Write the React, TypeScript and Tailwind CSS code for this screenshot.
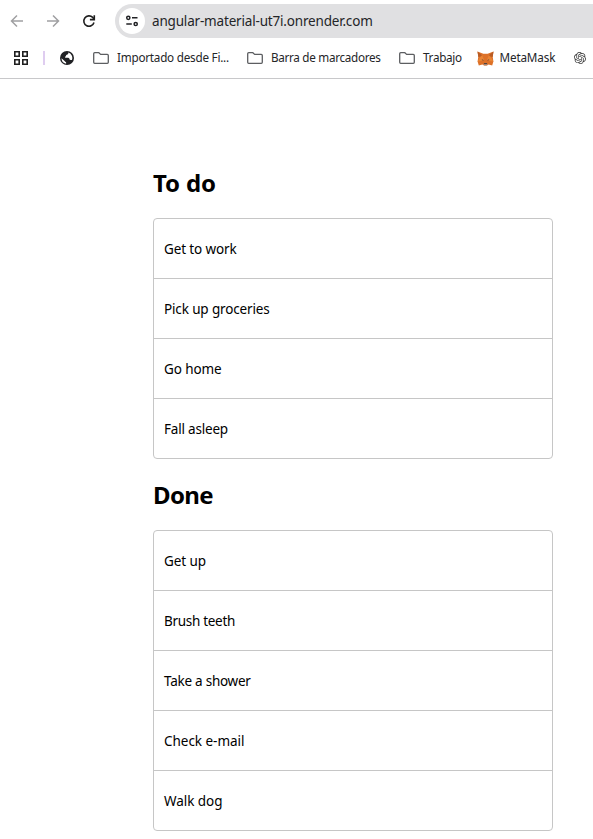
import type { ReactNode } from 'react';
import { SiOpenai } from 'react-icons/si';

const todo = [
  { label: 'Get to work', spacing: 'tracking-[-0.13px]' },
  { label: 'Pick up groceries', spacing: 'tracking-[-0.14px]' },
  { label: 'Go home', spacing: 'tracking-[-0.1px]' },
  { label: 'Fall asleep', spacing: 'tracking-[-0.2px]' },
];

const done = [
  { label: 'Get up', spacing: 'tracking-[-0.1px]' },
  { label: 'Brush teeth', spacing: 'tracking-[-0.3px]' },
  { label: 'Take a shower', spacing: 'tracking-[-0.25px]' },
  { label: 'Check e-mail', spacing: 'tracking-[-0.03px]' },
  { label: 'Walk dog', spacing: 'tracking-[-0.05px]' },
];

function Arrow({ className = '' }: { className?: string }) {
  return (
    <svg viewBox="0 0 14 14" className={`h-3.5 w-3.5 shrink-0 ${className}`} fill="none" stroke="#a0a0a2" strokeWidth="1.5">
      <path d="M13 7H1.8M7 1.5 1.5 7 7 12.5" />
    </svg>
  );
}

function Reload() {
  return (
    <svg viewBox="0 0 14 14" className="ml-[22px] h-3.5 w-3.5 shrink-0" fill="none" stroke="#1f1f1f" strokeWidth="1.6">
      <path d="M12 8.6A5.2 5.2 0 1 1 10.7 3.4L12 5" />
      <path d="M12.3 1.2v4.4H7.9" />
    </svg>
  );
}

function SiteSettings() {
  return (
    <svg viewBox="0 0 14 12" className="h-3 w-3.5" fill="none" stroke="#202124" strokeWidth="1.5">
      <circle cx="3.3" cy="2.8" r="1.6" />
      <path d="M7 2.8h5.5M1.3 9h5.5" />
      <circle cx="10.7" cy="9" r="1.6" />
    </svg>
  );
}

function AppsGrid() {
  return (
    <svg viewBox="0 0 14 14" className="h-3.5 w-3.5 shrink-0" fill="none" stroke="#1f1f1f" strokeWidth="1.6">
      <path d="M.8.8h4.4v4.4H.8zM8.8.8h4.4v4.4H8.8zM.8 8.8h4.4v4.4H.8zM8.8 8.8h4.4v4.4H8.8z" />
    </svg>
  );
}

function Globe() {
  return (
    <svg viewBox="0 0 14 14" className="ml-[15px] h-3.5 w-3.5 shrink-0">
      <circle cx="7" cy="7" r="7" fill="#202124" />
      <path fill="#fff" d="M8.2 1.5q.5 1.6-.8 2.1-1.5.3-1.5 1.3 0 .7-.9.8l.2 1.1h3q1.3.1 1.3 1.5.1.8 1.2.8h1.2A5.7 5.7 0 0 0 8.2 1.5zM1.5 7.2l3.1 2.9q.5 1 1.5 1.1v1.5A5.7 5.7 0 0 1 1.5 7.2z" />
    </svg>
  );
}

function Folder() {
  return (
    <svg viewBox="0 0 16 12" className="h-3 w-4 shrink-0" fill="none" stroke="#5c5e61" strokeWidth="1.3" strokeLinejoin="round">
      <path d="M1.7.7h4.2l1.7 1.7h6.7q1 0 1 1v6.9q0 1-1 1H1.7q-1 0-1-1V1.7q0-1 1-1z" />
    </svg>
  );
}

function Fox() {
  return (
    <svg viewBox="0 0 17 15" className="h-[15px] w-[17px] shrink-0">
      <path fill="#dd7128" d="m.5.5 5.8 2.3h4.4L16.5.5l-.8 5.2.7 4.8-1.2 4-3.6-.9-2 1.2H7.4l-2-1.2-3.6.9-1.2-4 .7-4.8z" />
      <path fill="#b85c25" d="m.5.5 4.3 3.4-.3 1.4-3.2.6zM16.5.5l-4.3 3.4.3 1.4 3.2.6z" />
      <path fill="#e98433" d="m5.2 4.3 1.8 4.5-3.6 1.5-2.9.2 2.5-4zM11.8 4.3 10 8.8l3.6 1.5 2.9.2-2.5-4z" />
      <path fill="#233447" d="m4.6 8.2 1.8.7-.3.8zM12.4 8.2l-1.8.7.3.8zM7 12.2h3l.3 1.2H6.7z" />
      <path fill="#cdb4a5" d="m6 13.6.7-.1h3.6l.7.1-1.4.9H7.4z" />
    </svg>
  );
}

function Bookmark({ icon, children, className }: { icon: ReactNode; children: ReactNode; className: string }) {
  return (
    <div className={`flex shrink-0 items-center ${className}`}>
      {icon}
      <span className="pb-0.5 text-[11.7px] leading-4 whitespace-nowrap">{children}</span>
    </div>
  );
}

function TaskList({ title, tasks }: { title: ReactNode; tasks: typeof todo }) {
  return (
    <section className="w-[400px]">
      <h2 className="mb-[19px] h-8 text-[24px] leading-8 font-bold">{title}</h2>
      <ul className="rounded border border-[#c6c6c6]">
        {tasks.map((task) => (
          <li key={task.label} className="flex h-[60px] items-center border-b border-[#c6c6c6] px-2.5 pt-0.5 text-[13.5px] last:h-[59px] last:border-b-0">
            <span className={task.spacing}>{task.label}</span>
          </li>
        ))}
      </ul>
    </section>
  );
}

export default function App() {
  return (
    <div className="h-[839px] w-[593px] overflow-hidden bg-white font-['Noto_Sans',sans-serif] text-black">
      <header className="h-[79px] border-b border-[#c8c8ca] text-[#242528]">
        <div className="flex h-[42px] items-center pl-2.5">
          <Arrow />
          <Arrow className="ml-[22px] rotate-180" />
          <Reload />
          <div className="ml-[19px] flex h-[34px] grow items-center rounded-l-full bg-[#e0e0e2] pl-1">
            <span className="flex h-[26px] w-[26px] items-center justify-center rounded-full bg-white">
              <SiteSettings />
            </span>
            <span className="ml-[7px] text-[13.5px] tracking-[-0.18px]">angular-material-ut7i.onrender.com</span>
          </div>
        </div>
        <div className="flex h-8 items-center pl-3.5">
          <AppsGrid />
          <span className="ml-[15px] h-3.5 w-[1.5px] bg-[#dfcdf0]" />
          <Globe />
          <Bookmark className="ml-[19px] w-[154px] gap-[8.5px]" icon={<Folder />}>
            <span className="tracking-[-0.23px]">Importado desde Fi...</span>
          </Bookmark>
          <Bookmark className="w-[152px] gap-[8.5px]" icon={<Folder />}>
            <span className="tracking-[-0.3px]">Barra de marcadores</span>
          </Bookmark>
          <Bookmark className="w-[78px] gap-[8.5px]" icon={<Folder />}>
            <span className="tracking-[-0.3px]">Trabajo</span>
          </Bookmark>
          <Bookmark className="w-[97px] gap-1.5" icon={<Fox />}>
            <span className="tracking-[-0.15px]">MetaMask</span>
          </Bookmark>
          <SiOpenai className="h-3 w-3 shrink-0 text-[#3c3c3c]" />
        </div>
      </header>
      <main className="flex flex-col gap-5 pt-[88px] pl-[153px]">
        <TaskList title={<span className="tracking-[-0.15px]">To do</span>} tasks={todo} />
        <TaskList title={<span className="tracking-[-0.6px]">Done</span>} tasks={done} />
      </main>
    </div>
  );
}
